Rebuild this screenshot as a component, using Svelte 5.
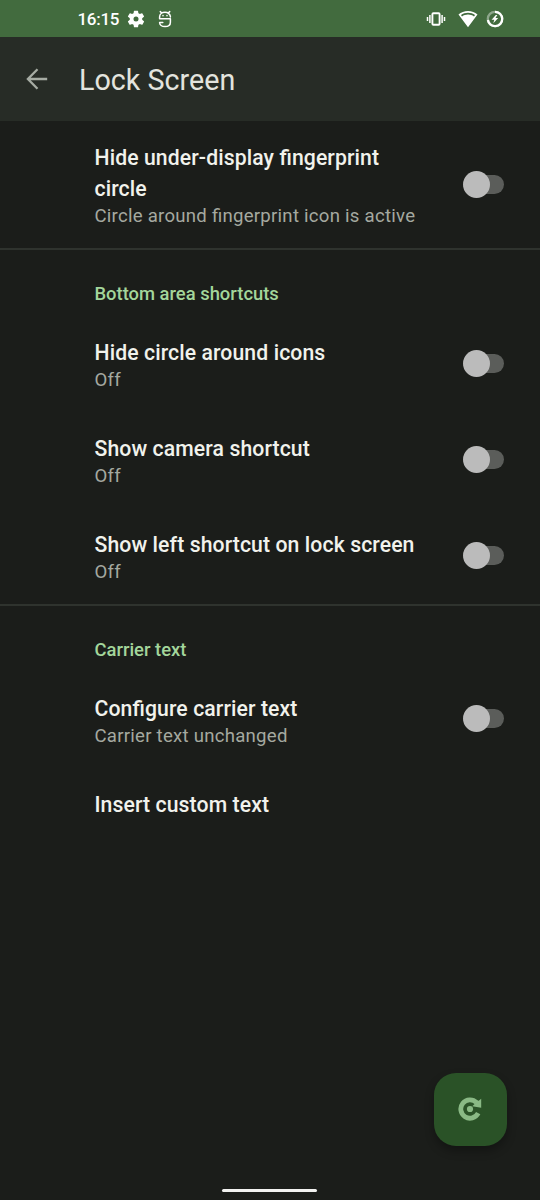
<script lang="ts">
  interface Pref {
    title: string;
    summary?: string;
    checked?: boolean;
  }

  interface Section {
    header?: string;
    prefs: Pref[];
  }

  let sections: Section[] = $state([
    {
      prefs: [
        { title: 'Hide under-display fingerprint circle', summary: 'Circle around fingerprint icon is active', checked: false }
      ]
    },
    {
      header: 'Bottom area shortcuts',
      prefs: [
        { title: 'Hide circle around icons', summary: 'Off', checked: false },
        { title: 'Show camera shortcut', summary: 'Off', checked: false },
        { title: 'Show left shortcut on lock screen', summary: 'Off', checked: false }
      ]
    },
    {
      header: 'Carrier text',
      prefs: [
        { title: 'Configure carrier text', summary: 'Carrier text unchanged', checked: false },
        { title: 'Insert custom text' }
      ]
    }
  ]);
</script>

<div class="screen">
  <div class="status">
    <span class="clock">16:15</span>
    <svg class="gear" viewBox="0 0 24 24" width="20" height="20">
      <path fill="currentColor" fill-rule="evenodd" d="M19.4 13c.04-.3.06-.65.06-1s-.02-.7-.07-1l2.1-1.6c.2-.15.24-.42.12-.64l-2-3.46c-.12-.22-.37-.3-.6-.22l-2.48 1a7.3 7.3 0 0 0-1.7-.98l-.37-2.65A.5.5 0 0 0 14 2h-4a.5.5 0 0 0-.49.42L9.13 5.1c-.6.24-1.17.57-1.69.97l-2.49-1a.5.5 0 0 0-.6.22l-2 3.46a.5.5 0 0 0 .12.64L4.58 11a8 8 0 0 0 0 2l-2.11 1.65a.5.5 0 0 0-.12.64l2 3.46c.12.22.37.3.6.22l2.49-1c.52.4 1.08.73 1.69.98l.38 2.65c.03.24.24.4.49.4h4c.25 0 .46-.16.49-.4l.38-2.65c.6-.25 1.17-.58 1.69-.98l2.49 1c.23.08.48 0 .6-.22l2-3.46a.5.5 0 0 0-.12-.64zM12 15a3 3 0 1 1 0-6 3 3 0 0 1 0 6z" />
    </svg>
    <svg class="face" viewBox="0 0 14 18" width="14" height="18" fill="none" stroke="currentColor" stroke-width="1.5" stroke-linecap="round" stroke-linejoin="round">
      <path d="M2.300 1.600l1.200 1.200M11.700 1.600l-1.200 1.200M12.400 7V6.800C12.400 4.200 10 2.300 7 2.300S1.600 4.200 1.600 7v1.800h10.800v3.400c0 2.600-2.200 4.400-5.400 4.400s-5.400-1.800-5.400-4.200h3.200" />
      <path d="M5 5.600v.1M9 5.600v.1" />
    </svg>
    <span class="grow"></span>
    <svg class="vibrate" viewBox="0 0 20 16" width="20" height="16" fill="none" stroke="currentColor">
      <rect x="6.400" y="2.200" width="7.200" height="11.600" rx="1" stroke-width="1.900" />
      <path d="M3.900 4v8M16.100 4v8M1.500 6v4M18.500 6v4" stroke-width="1.500" />
    </svg>
    <svg class="wifi" viewBox="0 0 20 18" width="20" height="18">
      <path fill="currentColor" fill-rule="evenodd" d="M10 17.200L.5 4.600C3 2.400 6.400 1 10 1s7 1.400 9.500 3.600zM3 5L4 6.400C5.700 5.200 7.800 4.500 10 4.500s4.300.7 6 1.900L17 5C15 3.600 12.600 2.800 10 2.800S5 3.600 3 5z" />
    </svg>
    <svg class="battery" viewBox="0 0 18 18" width="18" height="18">
      <circle cx="9" cy="9" r="7.200" fill="none" stroke="currentColor" stroke-opacity=".4" stroke-width="2.300" />
      <path d="M9 1.800A7.200 7.200 0 1 1 1.900 10" fill="none" stroke="currentColor" stroke-width="2.300" />
      <path d="M9.800 4.900L5.600 9.700h2.700l-1 3.600 4.900-5.200H9.500l1.800-3.200z" fill="currentColor" />
    </svg>
  </div>

  <header>
    <svg class="back" viewBox="0 0 22 22" width="22" height="22" fill="none" stroke="currentColor" stroke-width="2.300">
      <path d="M21.200 11H2M11.500 1.200L1.900 11l9.600 9.800" />
    </svg>
    <h1>Lock Screen</h1>
  </header>

  <main>
    {#each sections as section}
      <section>
        {#if section.header}
          <h2>{section.header}</h2>
        {/if}
        {#each section.prefs as pref}
          <div class="pref">
            <div class="text">
              <div class="title">{pref.title}</div>
              {#if pref.summary}
                <div class="summary">{pref.summary}</div>
              {/if}
            </div>
            {#if pref.checked !== undefined}
              <button
                class="switch"
                class:on={pref.checked}
                role="switch"
                aria-checked={pref.checked}
                aria-label={pref.title}
                onclick={() => (pref.checked = !pref.checked)}
              >
                <span class="thumb"></span>
              </button>
            {/if}
          </div>
        {/each}
      </section>
    {/each}
  </main>

  <button class="fab" aria-label="Restart SystemUI">
    <svg viewBox="0 0 24 24" width="24" height="24">
      <path d="M20.200 16.200A9.200 9.200 0 1 1 18.500 5.500" fill="none" stroke="currentColor" stroke-width="4.800" />
      <path d="M23.200 1.800v9l-9-1.500 3-2.800-1-2.500 4.500-.2z" fill="currentColor" />
      <circle cx="12" cy="12" r="3.100" fill="currentColor" />
    </svg>
  </button>
  <div class="handle"></div>
</div>

<style>
  :global(body) {
    background: #1b1d1a;
  }
  .screen {
    position: relative;
    display: flex;
    flex-direction: column;
    height: 1200px;
    overflow: hidden;
    background: #1b1d1a;
    color: #f1f2ec;
    font-family: Roboto, sans-serif;
    font-feature-settings: 'liga' 1;
  }
  .status {
    display: flex;
    align-items: center;
    box-sizing: border-box;
    height: 37px;
    padding: 0 36px 0 77.500px;
    background: #426b3e;
    color: #fff;
  }
  .clock {
    width: 41.500px;
    font-size: 17px;
    font-weight: 500;
    line-height: 38px;
    letter-spacing: -0.3px;
    white-space: nowrap;
  }
  .gear {
    margin-left: 7px;
  }
  .face {
    margin-left: 12px;
  }
  .grow {
    flex: 1;
  }
  .wifi {
    margin-left: 12px;
  }
  .battery {
    margin-left: 8px;
  }
  header {
    display: flex;
    align-items: center;
    height: 84px;
    padding-left: 26px;
    background: #272c26;
  }
  .back {
    margin-bottom: 1px;
    color: #a6aca3;
  }
  h1 {
    margin: 2px 0 0 31px;
    color: #e3e4de;
    font-size: 28.700px;
    font-weight: 400;
    line-height: 36px;
  }
  section + section {
    border-top: 2px solid #2f332e;
  }
  h2 {
    box-sizing: border-box;
    height: 65px;
    margin: 0;
    padding: 32px 0 0 94.500px;
    color: #a3d69b;
    font-size: 18.400px;
    font-weight: 500;
    line-height: 23px;
  }
  .pref {
    display: flex;
    align-items: center;
    justify-content: space-between;
    padding: 22px 36px 19px 94.500px;
  }
  section:first-child .pref {
    padding: 21px 36px 20px 94.500px;
  }
  section:nth-child(2) {
    padding-bottom: 0.600px;
  }
  .text {
    width: 335px;
  }
  .title {
    font-size: 21.200px;
    font-weight: 500;
    line-height: 31px;
    letter-spacing: 0.1px;
  }
  .summary {
    color: #a5a9a0;
    font-size: 18.600px;
    line-height: 24px;
    letter-spacing: 0.25px;
  }
  .switch {
    position: relative;
    width: 38px;
    height: 19px;
    margin-bottom: 3px;
    padding: 0;
    border: 0;
    border-radius: 10px;
    background: #5b5d5a;
  }
  section:first-child .switch {
    margin-bottom: 1px;
  }
  .thumb {
    position: absolute;
    top: -4px;
    left: -3.500px;
    width: 27px;
    height: 27px;
    border-radius: 50%;
    background: #bbb;
    transition: transform 150ms;
  }
  .on .thumb {
    transform: translateX(19px);
  }
  .on {
    background: #426b3e;
  }
  .fab {
    position: absolute;
    right: 33px;
    bottom: 54px;
    display: grid;
    place-items: center;
    width: 73.500px;
    height: 73.500px;
    border: 0;
    border-radius: 22px;
    background: #2a5227;
    color: #8ab985;
    box-shadow: 0 5px 10px rgba(0, 0, 0, 0.3);
  }
  .handle {
    position: absolute;
    bottom: 8px;
    left: 222px;
    width: 95px;
    height: 3px;
    border-radius: 2px;
    background: #f2f2f0;
  }
</style>
